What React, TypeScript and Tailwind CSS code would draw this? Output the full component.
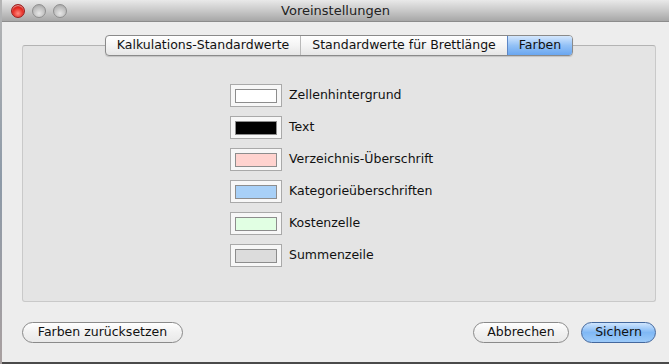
import React from "react";

// Einstellungsfenster (Mac OS X Aqua-Stil), Tab "Farben".

const FONT = { fontFamily: '"DejaVu Sans", "Liberation Sans", sans-serif' };

const COLORS: { label: string; swatch: string }[] = [
  { label: "Zellenhintergrund", swatch: "bg-[#ffffff]" },
  { label: "Text", swatch: "bg-[#000000]" },
  { label: "Verzeichnis-Überschrift", swatch: "bg-[#ffd3cf]" },
  { label: "Kategorieüberschriften", swatch: "bg-[#a8d0f7]" },
  { label: "Kostenzelle", swatch: "bg-[#e1ffe3]" },
  { label: "Summenzeile", swatch: "bg-[#dcdcdc]" },
];

const TABS = ["Kalkulations-Standardwerte", "Standardwerte für Brettlänge", "Farben"];

function TrafficLight({ red }: { red?: boolean }) {
  return (
    <span
      className={
        red
          ? "h-[14px] w-[14px] rounded-full border border-[#9b1d1d] bg-[radial-gradient(circle_at_50%_70%,#ff8a80_0%,#e3251d_55%,#a91410_100%)] shadow-[inset_0_1px_1px_rgba(255,255,255,0.6)]"
          : "h-[14px] w-[14px] rounded-full border border-[#8f8f8f] bg-[radial-gradient(circle_at_50%_70%,#e6e6e6_0%,#bdbdbd_60%,#9a9a9a_100%)]"
      }
    />
  );
}

function TitleBar() {
  return (
    <div className="relative flex h-[22px] items-center border-b border-[#8c8c8c] bg-gradient-to-b from-[#e9e9e9] via-[#c9c9c9] to-[#a7a7a7]">
      <div className="flex items-center gap-[7px] pl-[9px]">
        <TrafficLight red />
        <TrafficLight />
        <TrafficLight />
      </div>
      <span className="absolute inset-x-0 text-center text-[13px] text-[#222]">Voreinstellungen</span>
    </div>
  );
}

function Tabs() {
  return (
    <div className="relative z-10 flex h-[21px] overflow-hidden rounded-[4px] border border-[#8a8a8a] bg-gradient-to-b from-[#ffffff] via-[#f4f4f4] to-[#e6e6e6] shadow-[0_1px_1px_rgba(0,0,0,0.15)]">
      {TABS.map((t, i) => {
        const active = i === TABS.length - 1;
        return (
          <div
            key={t}
            className={
              active
                ? "flex items-center border-l border-[#5d86c4] bg-gradient-to-b from-[#d4e7fd] via-[#93c1f6] to-[#69a6f0] px-[11px] text-[12.5px] text-[#111]"
                : "flex items-center border-l border-[#b9b9b9] px-[11px] text-[12.5px] text-[#111] first:border-l-0"
            }
          >
            {t}
          </div>
        );
      })}
    </div>
  );
}

function ColorRow({ label, swatch }: { label: string; swatch: string }) {
  return (
    <div className="flex items-center gap-[7px]">
      <div className="flex h-[23px] w-[52px] items-center justify-center border border-[#a9a9a9] bg-[#f7f7f7]">
        <div className={`h-[14px] w-[42px] border border-[#8d8d8d] ${swatch}`} />
      </div>
      <span className="text-[12.5px] text-[#111]">{label}</span>
    </div>
  );
}

function AquaButton({ children, primary, w }: { children: React.ReactNode; primary?: boolean; w: string }) {
  return (
    <button
      type="button"
      className={
        primary
          ? `flex h-[21px] shrink-0 ${w} items-center justify-center rounded-full border border-[#44689d] bg-gradient-to-b from-[#cfe5fd] via-[#80b8f5] to-[#9ccaf9] text-[12.5px] text-[#111]`
          : `flex h-[21px] shrink-0 ${w} items-center justify-center rounded-full border border-[#8a8a8a] bg-gradient-to-b from-[#ffffff] via-[#f1f1f1] to-[#e9e9e9] text-[12.5px] text-[#111]`
      }
    >
      {children}
    </button>
  );
}

export default function App() {
  return (
    <div className="flex h-[364px] w-[669px] overflow-hidden bg-[#ededed]" style={FONT}>
      {/* Rand des dahinterliegenden Fensters */}
      <div className="w-[2px] bg-gradient-to-b from-[#b5b5b5] via-[#8d9aa8] to-[#a9a0a0]" />
      <div className="flex flex-1 flex-col border-b-2 border-[#4a4a4a]">
        <TitleBar />
        <div className="flex flex-1 flex-col pl-[20px] pr-[13px]">
          <div className="mt-[13px] flex justify-center">
            <Tabs />
          </div>
          <div className="-mt-[11px] h-[257px] rounded-[3px] border border-[#c9c9c9] border-t-[#b3b3b3] bg-[#e4e4e4] pl-[207px] pt-[38px]">
            <div className="flex flex-col gap-[9px]">
              {COLORS.map((c) => (
                <ColorRow key={c.label} label={c.label} swatch={c.swatch} />
              ))}
            </div>
          </div>
          <div className="mt-[20px] flex items-center">
            <AquaButton w="w-[161px]">Farben zurücksetzen</AquaButton>
            <div className="flex-1" />
            <AquaButton w="w-[96px]">Abbrechen</AquaButton>
            <div className="w-[12px] shrink-0" />
            <AquaButton w="w-[75px]" primary>
              Sichern
            </AquaButton>
          </div>
        </div>
      </div>
    </div>
  );
}
